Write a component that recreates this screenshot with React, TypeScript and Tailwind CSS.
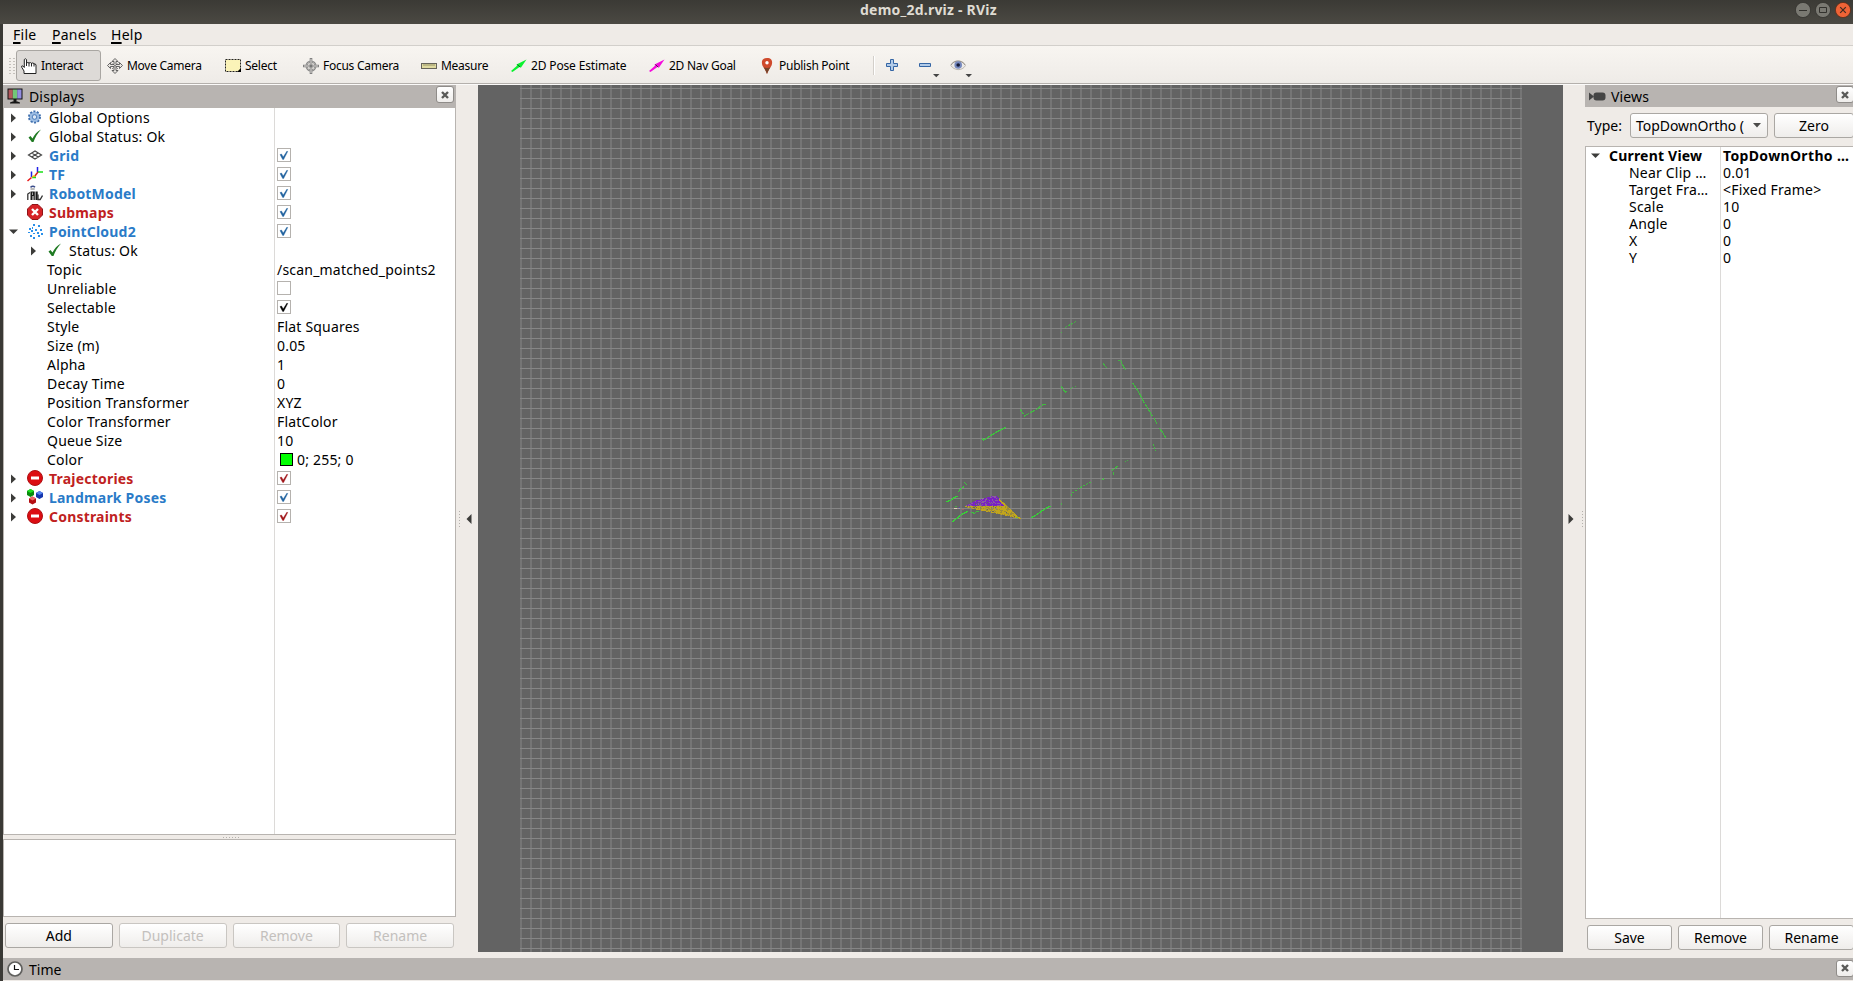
import { type ReactNode } from "react";
import { clsx } from "clsx";

type Tone = "plain" | "ok" | "error";

interface DisplayRow {
  arrow?: "right" | "down";
  check?: "blue" | "black" | "red" | "empty";
  icon?: ReactNode;
  label: string;
  level: "top" | "status" | "property";
  swatch?: boolean;
  tone?: Tone;
  value?: string;
}

const displayRows: DisplayRow[] = [
  { level: "top", arrow: "right", icon: <GearIcon />, label: "Global Options" },
  { level: "top", arrow: "right", icon: <OkIcon />, label: "Global Status: Ok" },
  { level: "top", arrow: "right", icon: <GridIcon />, label: "Grid", tone: "ok", check: "blue" },
  { level: "top", arrow: "right", icon: <TfIcon />, label: "TF", tone: "ok", check: "blue" },
  { level: "top", arrow: "right", icon: <RobotIcon />, label: "RobotModel", tone: "ok", check: "blue" },
  { level: "top", icon: <ErrorIcon />, label: "Submaps", tone: "error", check: "blue" },
  { level: "top", arrow: "down", icon: <CloudIcon />, label: "PointCloud2", tone: "ok", check: "blue" },
  { level: "status", arrow: "right", icon: <OkIcon />, label: "Status: Ok" },
  { level: "property", label: "Topic", value: "/scan_matched_points2" },
  { level: "property", label: "Unreliable", check: "empty" },
  { level: "property", label: "Selectable", check: "black" },
  { level: "property", label: "Style", value: "Flat Squares" },
  { level: "property", label: "Size (m)", value: "0.05" },
  { level: "property", label: "Alpha", value: "1" },
  { level: "property", label: "Decay Time", value: "0" },
  { level: "property", label: "Position Transformer", value: "XYZ" },
  { level: "property", label: "Color Transformer", value: "FlatColor" },
  { level: "property", label: "Queue Size", value: "10" },
  { level: "property", label: "Color", value: "0; 255; 0", swatch: true },
  { level: "top", arrow: "right", icon: <BlockedIcon />, label: "Trajectories", tone: "error", check: "red" },
  { level: "top", arrow: "right", icon: <MarkersIcon />, label: "Landmark Poses", tone: "ok", check: "blue" },
  { level: "top", arrow: "right", icon: <BlockedIcon />, label: "Constraints", tone: "error", check: "red" },
];

const viewRows = [
  ["Near Clip …", "0.01"],
  ["Target Fra…", "<Fixed Frame>"],
  ["Scale", "10"],
  ["Angle", "0"],
  ["X", "0"],
  ["Y", "0"],
];

export default function App() {
  return (
    <div className="flex h-[981px] w-[1853px] flex-col overflow-hidden bg-[#efebe7] font-['Noto_Sans',sans-serif] text-[14px] text-black">
      <TitleBar />
      <div className="flex h-[957px] border-l-[3px] border-[#3a3935]">
        <div className="flex w-[1850px] flex-col">
          <MenuBar />
          <ToolBar />
          <main className="flex h-[867px]">
            <DisplaysPanel />
            <Splitter side="left" />
            <Viewport />
            <Splitter side="right" />
            <ViewsPanel />
          </main>
          <div className="mt-1.5 flex h-[22px] shrink-0 items-center bg-[#b8b4b1]">
            <span className="ml-1 w-[22px]">
              <ClockIcon />
            </span>
            <span className="pt-0.5 text-[14px] leading-5">Time</span>
            <span className="mr-[-1px] mb-0.5 ml-auto">
              <CloseButton />
            </span>
          </div>
        </div>
      </div>
    </div>
  );
}

function TitleBar() {
  return (
    <header className="flex h-6 shrink-0 items-center bg-linear-to-b from-[#3b3a35] to-[#4b4943]">
      <h1 className="ml-[860px] w-[142px] pb-1 text-[14px] leading-5 font-bold tracking-[0.22px] whitespace-nowrap text-[#dfdbd2]">
        demo_2d.rviz - RViz
      </h1>
      <div className="mr-0.5 mb-1 ml-auto flex gap-1">
        <svg width="16" height="16" viewBox="0 0 16 16">
          <circle cx="8" cy="8" r="7.6" fill="#7a7972" stroke="#33322e" strokeWidth=".8" />
          <path d="M4 8.5h8" stroke="#32312d" />
        </svg>
        <svg width="16" height="16" viewBox="0 0 16 16">
          <circle cx="8" cy="8" r="7.6" fill="#7a7972" stroke="#33322e" strokeWidth=".8" />
          <path d="M4.5 5.5h7v5h-7z" fill="none" stroke="#32312d" />
        </svg>
        <svg width="16" height="16" viewBox="0 0 16 16">
          <circle cx="8" cy="8" r="7.6" fill="#ee6336" stroke="#5c2c18" strokeWidth=".8" />
          <path d="m5.2 5.2 5.6 5.6m0-5.6-5.6 5.6" stroke="#3d2a20" strokeWidth="1.2" />
        </svg>
      </div>
    </header>
  );
}

function MenuBar() {
  return (
    <nav className="flex h-[22px] shrink-0 items-center border-b border-[#d2cfcb] pl-2.5 text-[14px] leading-5 tracking-[0.25px]">
      <span className="w-[39px]">
        <MenuKey>F</MenuKey>ile
      </span>
      <span className="w-[59px]">
        <MenuKey>P</MenuKey>anels
      </span>
      <span>
        <MenuKey>H</MenuKey>elp
      </span>
    </nav>
  );
}

function MenuKey({ children }: { children: ReactNode }) {
  return <span className="underline decoration-2 underline-offset-2">{children}</span>;
}

function ToolBar() {
  return (
    <div className="flex h-[39px] shrink-0 items-start border-b border-[#fbfaf9] bg-linear-to-b from-[#f8f5f1] to-[#eeebe7] text-[12px] shadow-[inset_0_-1px_0_#b4b0ac]">
      <div className="mt-[11px] ml-[5px] h-[17px] w-2 bg-[radial-gradient(circle,#c4c0bb_0.7px,transparent_0.9px)] bg-size-[4px_3px]" />
      <Tool className="w-[85px] rounded-[3px] border-[#a9a6a2] bg-[#dddad7]" icon={<HandIcon />} label="Interact" />
      <Tool className="ml-px w-[118px]" icon={<MoveIcon />} label="Move Camera" />
      <Tool className="w-[78px]" icon={<SelectIcon />} label="Select" />
      <Tool className="w-[118px]" icon={<FocusIcon />} label="Focus Camera" />
      <Tool className="w-[90px]" icon={<RulerIcon />} label="Measure" />
      <Tool className="w-[138px] tracking-[-0.15px]" icon={<ArrowIcon color="#0bf22f" />} label="2D Pose Estimate" />
      <Tool className="w-[110px]" icon={<ArrowIcon color="#f50bdc" />} label="2D Nav Goal" />
      <Tool className="w-[118px]" icon={<PinIcon />} label="Publish Point" />
      <div className="mt-2.5 ml-px h-[19px] border-r border-l border-r-white border-l-[#d3cfca]" />
      <div className="mt-3 ml-[10px] flex items-start">
        <svg width="14" height="14" viewBox="0 0 14 14">
          <path d="M5.5 1.5h3v4h4v3h-4v4h-3v-4h-4v-3h4z" fill="#b2cbe8" stroke="#3465a4" strokeLinejoin="round" />
        </svg>
        <svg className="ml-5" width="22" height="20" viewBox="0 0 22 20">
          <path d="M.5 5.5h11v3H.5z" fill="#b2cbe8" stroke="#3465a4" strokeLinejoin="round" />
          <path d="M14 16h6.5l-3.2 3.2z" fill="#444" />
        </svg>
        <svg className="ml-[9px]" width="24" height="20" viewBox="0 0 24 20">
          <path d="M.8 7.5C3 1.5 13 1.2 15.5 7.5 12 13.5 4 12.5.8 7.5z" fill="#eceae7" stroke="#bcb8b2" />
          <path d="M1 7C4 1.8 12 1.8 15 7" fill="none" stroke="#9b958d" />
          <circle cx="8.2" cy="7" r="3.8" fill="#7588bd" />
          <circle cx="8.2" cy="7" r="1.8" fill="#151a36" />
          <path d="M15.5 16H22l-3.2 3.2z" fill="#444" />
        </svg>
      </div>
    </div>
  );
}

function Tool({ className, icon, label }: { className: string; icon: ReactNode; label: string }) {
  return (
    <button
      className={clsx(
        "mt-1 flex h-[31px] shrink-0 items-center gap-1 border pl-1 whitespace-nowrap",
        !className.includes("border-") && "border-transparent",
        !className.includes("tracking-") && "tracking-[-0.27px]",
        className,
      )}
      type="button"
    >
      {icon}
      {label}
    </button>
  );
}

function PanelHeader({ icon, title }: { icon: ReactNode; title: string }) {
  return (
    <div className="flex h-[22px] shrink-0 items-center bg-[#b8b4b1]">
      <span className="ml-1 w-[22px]">{icon}</span>
      <h2 className="pt-0.5 text-[14px] leading-5 tracking-[0.15px]">{title}</h2>
      <span className="mr-0.5 mb-[3px] ml-auto">
        <CloseButton />
      </span>
    </div>
  );
}

function CloseButton() {
  return (
    <button
      aria-label="Close"
      className="flex h-[17px] w-[18px] items-center justify-center rounded-[3px] border border-[#8f8c89] bg-linear-to-b from-white to-[#efedeb]"
      type="button"
    >
      <svg width="8" height="8" viewBox="0 0 8 8">
        <path d="m1 1 6 6m0-6L1 7" stroke="#5a5a58" strokeWidth="2.4" />
      </svg>
    </button>
  );
}

function DisplaysPanel() {
  return (
    <section className="flex w-[453px] shrink-0 flex-col">
      <PanelHeader icon={<MonitorIcon />} title="Displays" />
      <div className="flex h-[728px] shrink-0 flex-col border border-[#b8b4b0] bg-white">
        {displayRows.map((row) => (
          <DisplayItem key={row.label} row={row} />
        ))}
        <div className="ml-[270px] w-0 flex-1 border-l border-[#dcdad8]" />
      </div>
      <div className="mt-px ml-[219px] h-[3px] w-[18px] bg-[radial-gradient(circle,#b4b0ac_0.7px,transparent_0.9px)] bg-size-[3px_3px]" />
      <div className="h-[78px] shrink-0 border border-[#b8b4b0] bg-white" />
      <div className="mt-1.5 flex gap-1.5 pr-0.5 pl-0.5">
        <PushButton className="flex-1" label="Add" />
        <PushButton className="flex-1" disabled label="Duplicate" />
        <PushButton className="flex-1" disabled label="Remove" />
        <PushButton className="flex-1" disabled label="Rename" />
      </div>
    </section>
  );
}

function DisplayItem({ row }: { row: DisplayRow }) {
  return (
    <div className="flex h-[19px] shrink-0 leading-[19px] tracking-[0.2px] whitespace-nowrap">
      <div
        className={clsx(
          "flex w-[270px] items-center",
          row.level === "top" && "pl-[7px]",
          row.level === "status" && "pl-[27px]",
          row.level === "property" && "pl-[43px]",
        )}
      >
        {row.level !== "property" && (
          <>
            <span className="w-4">{row.arrow && <TreeArrow direction={row.arrow} />}</span>
            <span className="mb-0.5 w-[22px]">{row.icon}</span>
          </>
        )}
        <span
          className={clsx(
            row.tone === "ok" && "font-bold text-[#2a7bc8]",
            row.tone === "error" && "font-bold text-[#c01f22]",
          )}
        >
          {row.label}
        </span>
      </div>
      <div className="flex flex-1 items-center border-l border-[#dcdad8] pl-0.5">
        {row.check && <CheckBox color={row.check} />}
        {row.swatch && <span className="mr-1 ml-[3px] size-[13px] border border-black bg-[#00ff00]" />}
        {row.value}
      </div>
    </div>
  );
}

function TreeArrow({ direction }: { direction: "right" | "down" }) {
  return (
    <svg className={clsx(direction === "down" && "-ml-0.5")} width="9" height="10" viewBox="0 0 9 10">
      <path d={direction === "right" ? "M0 .5v9L5 5z" : "M0 2.5h9L4.500 7z"} fill="#3c3c3a" />
    </svg>
  );
}

function CheckBox({ color }: { color: "blue" | "black" | "red" | "empty" }) {
  return (
    <span className="mb-px flex size-[14px] items-center justify-center border border-[#b5b2ae] bg-white">
      {color !== "empty" && (
        <svg
          className={clsx(
            color === "blue" && "text-[#20629f]",
            color === "black" && "text-black",
            color === "red" && "text-[#a01518]",
          )}
          width="12"
          height="12"
          viewBox="0 0 12 12"
        >
          <path d="M2 5.600 3.500 5l1.700 3L9 2l.7.600L5.600 10.500H4.700z" fill="currentColor" stroke="currentColor" strokeWidth=".4" />
        </svg>
      )}
    </span>
  );
}

function PushButton({ className, disabled = false, label }: { className?: string; disabled?: boolean; label: string }) {
  return (
    <button
      className={clsx(
        "h-[25px] rounded-[3px] border bg-linear-to-b from-white to-[#efedeb] text-center leading-5",
        disabled ? "border-[#c9c6c2] text-[#c3c0bd]" : "border-[#aaa7a3]",
        className,
      )}
      disabled={disabled}
      type="button"
    >
      {label}
    </button>
  );
}

function Splitter({ side }: { side: "left" | "right" }) {
  const dots = (
    <span className="h-[18px] w-[3px] bg-[radial-gradient(circle,#b4b0ac_0.7px,transparent_0.9px)] bg-size-[3px_3px]" />
  );

  return (
    <div className="flex w-[22px] shrink-0 items-center pr-px pl-0.5">
      {side === "left" && dots}
      <svg className={side === "left" ? "ml-[5px]" : "ml-[3px]"} width="6" height="10" viewBox="0 0 6 10">
        <path d={side === "left" ? "M5.500 0v10L.5 5z" : "M.5 0v10l5-5z"} fill="#3c3c3a" />
      </svg>
      {side === "right" && <span className="ml-auto flex">{dots}</span>}
    </div>
  );
}

// Laser returns in view space, three units to a pixel.
const scanLines = [
  { points: "436,82 448,75 458,70 467,65", dash: "6 4", opacity: 0.65 },
  { points: "423,97 426,97", opacity: 0.65 },
  { points: "550,190 554,196 560,203", dash: "8 2", opacity: 0.7 },
  { points: "595,181 602,181 608,194 617,211", dash: "8 1", opacity: 0.7 },
  { points: "638,250 647,262 658,279 672,307 684,325 697,349", dash: "16 2", opacity: 0.75 },
  { points: "702,355 708,367 710,374", dash: "4 3", opacity: 0.75 },
  { points: "717,384 726,394 737,414", opacity: 0.75 },
  { points: "700,432 703,443 707,452", dash: "7 2", opacity: 0.75 },
  { points: "424,259 436,277 440,274", opacity: 0.75 },
  { points: "450,267 467,259", dash: "3 5", opacity: 0.7 },
  { points: "301,328 313,348 333,337 350,328 370,313 378,313", dash: "18 3", opacity: 0.75 },
  { points: "187,416 191,420 212,407 233,394 257,382", opacity: 0.85 },
  { points: "615,485 623,481", dash: "3 3", opacity: 0.7 },
  { points: "593,499 577,511 582,524", dash: "10 2", opacity: 0.75 },
  { points: "546,538 552,537", opacity: 0.75 },
  { points: "513,546 493,556 472,568 455,580 455,594", dash: "6 4", opacity: 0.75 },
  { points: "424,610 424,614", opacity: 0.6 },
  { points: "334,653 353,642 371,629 391,618", opacity: 0.95 },
  { points: "134,547 139,556", dash: "6 2", opacity: 0.85 },
  { points: "131,560 114,574", dash: "8 2", opacity: 0.85 },
  { points: "79,605 92,601 107,590 112,588", opacity: 1 },
  { points: "97,665 113,653 127,642 144,634", opacity: 1 },
  { points: "153,637 163,640 170,634 178,634", dash: "12 2", opacity: 0.8 },
  { points: "105,619 111,620", opacity: 0.6 },
];

interface Speck {
  color: string;
  x: number;
  y: number;
}

// Scatter the two scan sectors, denser next to their shared edge.
function buildSpecks(): Speck[] {
  const specks: Speck[] = [];
  for (let y = 587; y < 656; y += 3) {
    for (let x = 132; x < 303; x += 3) {
      const noise = Math.abs(Math.sin(x * 12.9898 + y * 78.233) * 43758.5453) % 1;
      const top = x < 170 ? 617 - (x - 132) * 0.5 : x < 212 ? 598 - (x - 170) * 0.26 : x < 230 ? 587 : 587 + (x - 230) * 0.94;
      const bottom = x < 215 ? 619 + (x - 132) * 0.2 : 636 + (x - 215) * 0.22;
      if (y < top || y > bottom) {
        continue;
      }
      const purple = y < 616 && x < 255 && !(x > 234 && y < top + 7);
      const keep = purple ? (y > 597 && x > 182 ? 0.98 : 0.86) : x > 225 ? 0.98 : 0.88;
      if (noise > keep) {
        continue;
      }
      const faded = noise > keep - 0.26;
      specks.push({ x, y, color: purple ? (faded ? "#8a5c9f" : "#7920c4") : faded ? "#9b8a3b" : "#c2a51c" });
    }
  }
  return specks;
}

const specks = buildSpecks();

function Viewport() {
  return (
    <div className="relative h-[867px] w-[1085px] shrink-0 bg-[#636363] pl-[42px]">
      <div className="h-[867px] w-[1002px] bg-[linear-gradient(to_bottom,#868686_1px,transparent_1px),linear-gradient(to_right,#757575_2px,transparent_2px)] bg-size-[10px_10px] bg-position-[0_3px,0_0]" />
      <svg className="absolute top-0 left-0" width="1085" height="867" viewBox="0 0 1085 867" shapeRendering="crispEdges">
        <g transform="translate(442 215) scale(.33333)">
          {scanLines.map((line) => (
            <polyline
              key={line.points}
              points={line.points}
              fill="none"
              stroke="#36d336"
              strokeWidth="3.6"
              strokeDasharray={line.dash}
              opacity={line.opacity}
            />
          ))}
          {specks.map((speck) => (
            <rect key={`${speck.x}-${speck.y}`} x={speck.x} y={speck.y} width="3" height="3" fill={speck.color} />
          ))}
          <path d="M102 625h9" stroke="#ddd0b5" strokeWidth="3" />
          <path d="M111 625h9" stroke="#a796a2" strokeWidth="3" />
          <path d="M116 622h4" stroke="#4c4bb0" strokeWidth="3" />
          <path d="M125 628h6" stroke="#a55d5d" strokeWidth="3" />
          <path d="M287 652h8" stroke="#7ec915" strokeWidth="3" />
        </g>
      </svg>
    </div>
  );
}

function ViewsPanel() {
  return (
    <section className="flex w-[268px] shrink-0 flex-col">
      <div className="-mr-[3px] flex flex-col">
        <PanelHeader icon={<CameraIcon />} title="Views" />
      </div>
      <div className="mt-1.5 flex h-[25px] shrink-0 items-center">
        <span className="w-[45px] pl-0.5">Type:</span>
        <button
          className="flex h-[25px] w-[138px] items-center rounded-[3px] border border-[#aaa7a3] bg-linear-to-b from-white to-[#efedeb] pl-[5px]"
          type="button"
        >
          <span className="w-[111px] text-left leading-5 tracking-[-0.05px] whitespace-nowrap">TopDownOrtho (</span>
          <svg className="ml-1.5" width="8" height="5" viewBox="0 0 8 5">
            <path d="M0 0h8L4 4.500z" fill="#4b4b49" />
          </svg>
        </button>
        <PushButton className="-mr-px ml-1.5 flex-1" label="Zero" />
      </div>
      <div className="mt-2 flex h-[773px] shrink-0 flex-col border-y border-l border-[#b8b4b0] bg-white leading-[17px] tracking-[0.2px] whitespace-nowrap">
        <div className="flex h-[17px] shrink-0 font-bold">
          <div className="flex w-[134px] items-center pl-[7px]">
            <span className="w-4">
              <TreeArrow direction="down" />
            </span>
            <span>Current View</span>
          </div>
          <div className="flex-1 border-l border-[#dcdad8] pl-0.5 tracking-[0.35px]">TopDownOrtho …</div>
        </div>
        {viewRows.map(([name, value]) => (
          <div className="flex h-[17px] shrink-0" key={name}>
            <div className="w-[134px] pl-[43px]">{name}</div>
            <div className="flex-1 border-l border-[#dcdad8] pl-0.5">{value}</div>
          </div>
        ))}
        <div className="ml-[134px] w-0 flex-1 border-l border-[#dcdad8]" />
      </div>
      <div className="mt-1.5 flex gap-1.5 overflow-hidden pl-0.5">
        <PushButton className="w-[85px] shrink-0" label="Save" />
        <PushButton className="w-[85px] shrink-0" label="Remove" />
        <PushButton className="w-[85px] shrink-0" label="Rename" />
      </div>
    </section>
  );
}

function GearIcon() {
  return (
    <svg width="16" height="16" viewBox="0 0 16 16">
      <circle cx="7.500" cy="8" r="5.500" fill="#9dbde3" stroke="#3f6fae" strokeWidth="2" strokeDasharray="2 1.450" />
      <circle cx="7.500" cy="8" r="4.600" fill="#9dbde3" />
      <circle cx="7.500" cy="8" r="2.300" fill="#dce8f6" stroke="#4a7cbb" />
    </svg>
  );
}

function OkIcon() {
  return (
    <svg width="16" height="16" viewBox="0 0 16 16">
      <path d="M1.500 9.500 3.500 8l2 2.500C7.500 6.500 10 3.500 14 1.500 10.500 5.500 8 9.500 6.500 14H4.800z" fill="#1f7a22" />
    </svg>
  );
}

function GridIcon() {
  return (
    <svg width="16" height="16" viewBox="0 0 16 16">
      <path d="m1.500 8 6.500-4L14.500 8 8 12zM4.700 6l6.500 4m0-4-6.500 4" fill="none" stroke="#474747" strokeWidth="1.200" />
    </svg>
  );
}

function TfIcon() {
  return (
    <svg width="16" height="16" viewBox="0 0 16 16" fill="none" strokeWidth="1.500">
      <path d="M10.500 6V1M4.500 11V5.500" stroke="#2020e8" />
      <path d="M11 6h5M5 11.500h4" stroke="#18e018" />
      <path d="m11 6-3.500 4.500" stroke="#d22020" />
      <path d="m4.500 11.500-4 3.500" stroke="#e81818" />
      <path d="m5 11 3-1.500" stroke="#e8c618" />
    </svg>
  );
}

function RobotIcon() {
  return (
    <svg width="16" height="16" viewBox="0 0 16 16">
      <path d="M3.500 2.300Q6 .3 8 2.300" fill="none" stroke="#394b89" strokeWidth="1.500" />
      <path d="M3.500 4h4.200" stroke="#777" />
      <path d="M3.500 6.500h4.300V15H6.500v-4H5.500v4H3.500zM8.500 6.500h2.200V15H8.500z" fill="#1b1b1b" />
      <path d="M.8 15V9L3 7.500m8 2v5h2.200L15.500 10.500" fill="none" stroke="#333" strokeWidth="1.300" />
      <path d="M5.500 7.500v2.500" stroke="#aaa" />
    </svg>
  );
}

function ErrorIcon() {
  return (
    <svg width="16" height="16" viewBox="0 0 16 16">
      <path d="M5 .5h6L15.500 5v6L11 15.500H5L.5 11V5z" fill="#d62226" stroke="#8f1518" />
      <path d="m5 5 6 6m0-6-6 6" stroke="#fff" strokeWidth="2.400" />
    </svg>
  );
}

function BlockedIcon() {
  return (
    <svg width="16" height="16" viewBox="0 0 16 16">
      <circle cx="8" cy="8" r="7.500" fill="#dc0d12" stroke="#ad1013" />
      <path d="M4 6.500h8v3H4z" fill="#fff" />
    </svg>
  );
}

function CloudIcon() {
  return (
    <svg width="16" height="16" viewBox="0 0 16 16" shapeRendering="crispEdges">
      <path
        d="M6 1h2v2H6zM11 2h2v2h-2zM2 5h2v2H2zM5 4h1v2H5zM8 6h2v2H8zM4 7h2v2H4zM13 6h2v2h-2zM1 9h2v1H1zM10 9h2v2h-2zM6 10h2v1H6zM14 10h2v2h-2zM3 12h2v2H3zM11 12h2v2h-2zM6 14h2v2H6z"
        fill="#2b90e9"
      />
    </svg>
  );
}

function MarkersIcon() {
  return (
    <svg width="16" height="16" viewBox="0 0 16 16">
      <path d="m3.500 0 3.500 2v4L3.500 8 0 6V2z" fill="#098b0d" />
      <path d="m3.500 0 3.500 2-3.500 2L0 2z" fill="#19e11d" />
      <path d="m12.500 2 3.500 2v4l-3.500 2L9 8V4z" fill="#1536ad" />
      <path d="m12.500 2 3.500 2-3.500 2L9 4z" fill="#5585f0" />
      <path d="m5.500 7.500 3.500 2v4l-3.500 2-3.500-2v-4z" fill="#b40d12" />
      <path d="m5.500 7.500 3.500 2-3.500 2-3.500-2z" fill="#ed6b6b" />
    </svg>
  );
}

function MonitorIcon() {
  return (
    <svg width="16" height="16" viewBox="0 0 16 16">
      <path d="M.5.5h15v11H.5z" fill="#111" />
      <path d="M1.500 1.500h4.300v9H1.500z" fill="#b25a5e" />
      <path d="M5.800 1.500h4.400v9H5.800z" fill="#72c677" />
      <path d="M10.200 1.500h4.300v9h-4.300z" fill="#938de0" />
      <path d="M6.500 11h3v2.500h-3zM3 14.500q5-2.500 10 0v1H3z" fill="#171717" />
    </svg>
  );
}

function CameraIcon() {
  return (
    <svg width="17" height="16" viewBox="0 0 17 16">
      <path d="M0 4.500v8l5-4z" fill="#444" />
      <rect x="4.500" y="4.500" width="12" height="8" rx="3" fill="#444" />
    </svg>
  );
}

function ClockIcon() {
  return (
    <svg width="16" height="16" viewBox="0 0 16 16">
      <circle cx="8" cy="8" r="7" fill="#fff" stroke="#60605e" strokeWidth="1.700" />
      <path d="M7.500 4v4.500H12" fill="none" stroke="#111" strokeWidth="1.200" />
    </svg>
  );
}

function HandIcon() {
  return (
    <svg width="16" height="16" viewBox="0 0 16 16">
      <path
        d="M5.500 8V1.500Q4.500 0 3.300 1.500V9.500L1.700 7.800Q.3 7.500.7 9.200L3 13v2.500h12V7Q14.500 5.300 13 6v-.3Q12 4.300 10.500 5.300Q9.500 4 8 5Q7 4 5.500 5"
        fill="#fff"
        stroke="#222"
        strokeWidth="1"
      />
      <path d="M8 5v3.500M10.500 5v3.500M13 6v2.500" stroke="#222" />
    </svg>
  );
}

function MoveIcon() {
  return (
    <svg width="16" height="16" viewBox="0 0 16 16">
      <path
        d="M8 .5 5 3.500h2v3H3.500v-2L.5 7.500l3 3v-2H7v4H5l3 3 3-3H9v-4h3.500v2l3-3-3-3v2H9v-3h2z"
        fill="#e8e5e1"
        stroke="#555"
        strokeWidth=".9"
      />
      <path d="m4.500 4.500 7 7m0-7-7 7" stroke="#555" strokeDasharray="1 1" />
    </svg>
  );
}

function SelectIcon() {
  return (
    <svg width="16" height="16" viewBox="0 0 16 16">
      <path d="M.5 1.500h15v12H.5z" fill="#fbf3b8" stroke="#222" strokeDasharray="2 1" />
      <path d="M12 14h4v-4z" fill="#000" />
    </svg>
  );
}

function FocusIcon() {
  return (
    <svg width="16" height="16" viewBox="0 0 16 16" fill="none">
      <circle cx="8" cy="8" r="4.500" stroke="#808080" strokeWidth="2" />
      <circle cx="8" cy="8" r="4.500" stroke="#d0cecb" strokeWidth=".6" />
      <path d="M8 0v16M0 8h16" stroke="#808080" strokeWidth="2.600" />
      <path d="M8 1v14M1 8h14" stroke="#dedbd8" />
      <circle cx="8" cy="8" r="1.500" fill="#777" />
    </svg>
  );
}

function RulerIcon() {
  return (
    <svg width="16" height="16" viewBox="0 0 16 16">
      <rect x=".5" y="5.500" width="15" height="5" fill="#dfdaa0" stroke="#66645a" />
      <path d="M3 6v2m2-2v2m2-2v2m2-2v2m2-2v2m2-2v2" stroke="#77734f" strokeWidth=".7" />
    </svg>
  );
}

function ArrowIcon({ color }: { color: string }) {
  return (
    <svg width="16" height="16" viewBox="0 0 16 16">
      <path d="m0 13 6-5.200L5.500 6.500 15.500 1.500 10 9.500 8.500 9 1.500 14z" fill={color} />
      <path d="m6.500 6.500 2.700 2.700" stroke="#24462b" strokeWidth=".9" />
    </svg>
  );
}

function PinIcon() {
  return (
    <svg width="16" height="16" viewBox="0 0 16 16">
      <path d="M8 0C1.800 0 2.300 5.500 4 8.500 5.500 10.800 6.500 12 8 16c1.500-4 2.500-5.200 4-7.500C13.700 5.500 14.200 0 8 0z" fill="#cf4a2c" />
      <path d="M4.500 9.200q3.500 1.500 7 0C10 11.500 9.300 12.500 8 16 6.700 12.500 6 11.500 4.500 9.200z" fill="#74432a" />
      <circle cx="8" cy="4.800" r="1.700" fill="#fff" />
    </svg>
  );
}
